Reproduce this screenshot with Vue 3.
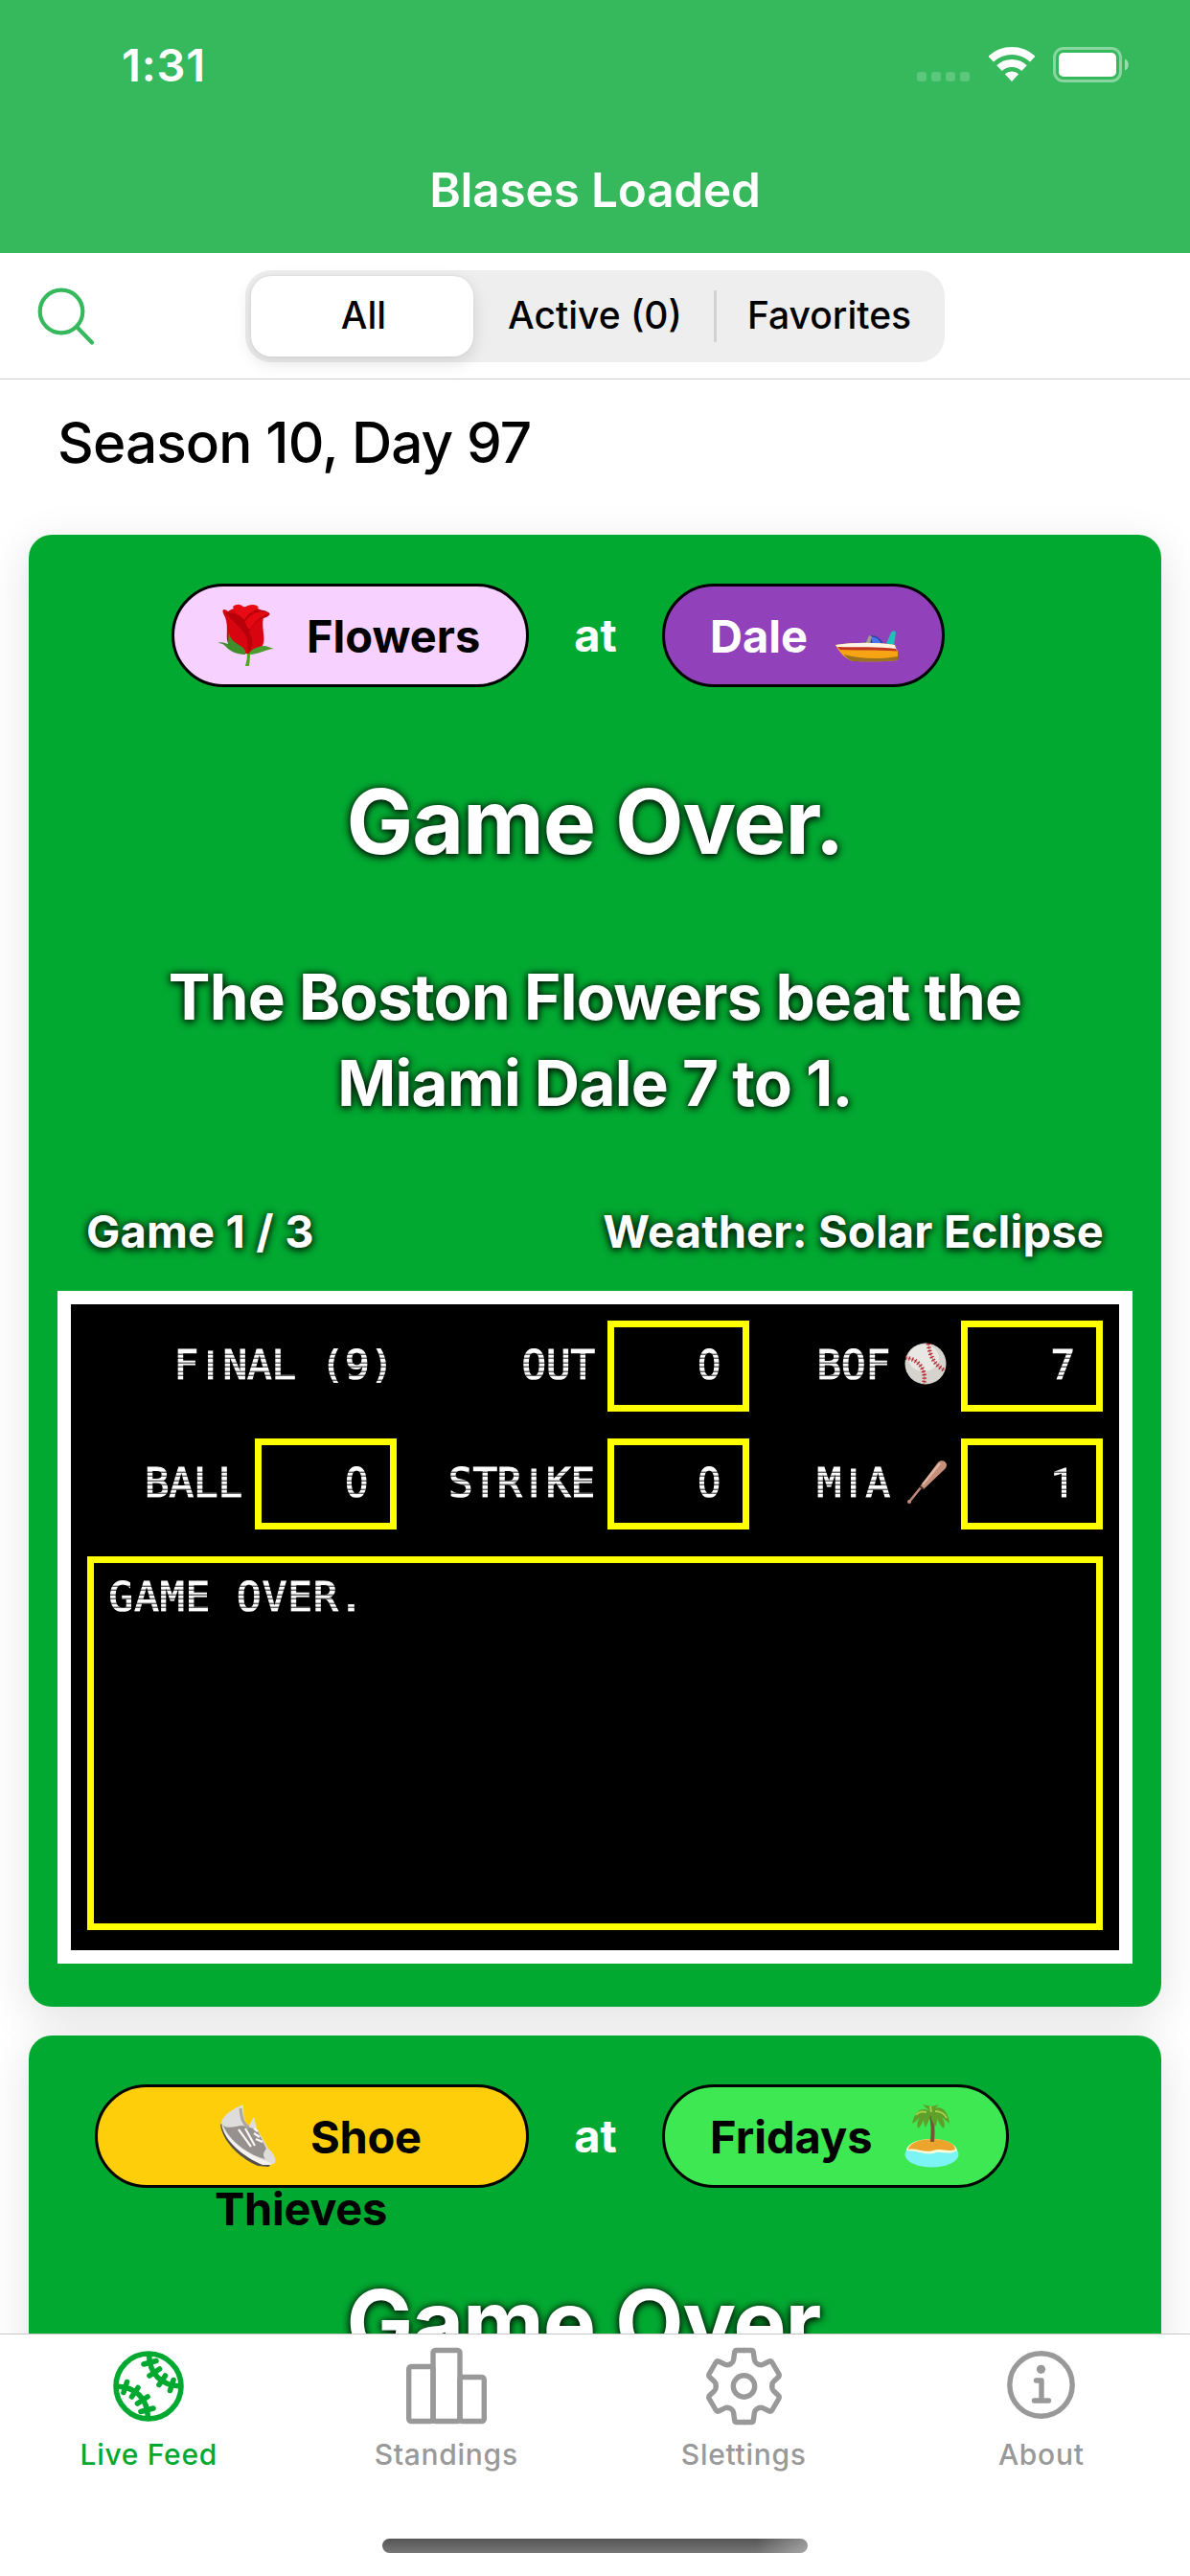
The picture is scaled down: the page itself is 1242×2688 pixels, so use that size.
<script setup>
const segments = ['All', 'Active (0)', 'Favorites']

const games = [
  {
    away: { name: 'Flowers', icon: 'rose', cls: 'flowers' },
    home: { name: 'Dale', icon: 'boat', cls: 'dale' },
    summary: 'The Boston Flowers beat the Miami Dale 7 to 1.',
    series: 'Game 1 / 3',
    weather: 'Weather: Solar Eclipse',
    board: [
      { label: 'FINAL (9)' },
      { label: 'OUT', value: '0' },
      { label: 'BOF', icon: 'ball', value: '7' },
      { label: 'BALL', value: '0' },
      { label: 'STRIKE', value: '0' },
      { label: 'MIA', icon: 'bat', value: '1' },
    ],
    message: 'GAME OVER.',
  },
  {
    away: { name: 'Shoe Thieves', icon: 'shoe', cls: 'thieves' },
    home: { name: 'Fridays', icon: 'island', cls: 'fridays' },
  },
]

const tabs = ['Live Feed', 'Standings', 'Slettings', 'About']
const gearQuarters = ['', 'matrix(-1 0 0 1 79 0)', 'matrix(1 0 0 -1 0 82)', 'matrix(-1 0 0 -1 79 82)']

const glyphClass = (c) => ({ I: 'bar', 0: 'zero', 1: 'one' })[c] || ''
</script>

<template>
  <div class="screen">
    <header class="header">
      <div class="status">
        <span class="time">1:31</span>
        <div class="indicators">
          <div class="signal"><i></i><i></i><i></i><i></i></div>
          <svg class="wifi" viewBox="0 0 48 36" width="48" height="36">
            <path d="M2.2 12.6A32 32 0 0 1 45.8 12.6" fill="none" stroke="#fff" stroke-width="8" />
            <path d="M11 22.1A19 19 0 0 1 37 22.1" fill="none" stroke="#fff" stroke-width="8" />
            <path d="M24 36L16.8 28.3A10.5 10.5 0 0 1 31.2 28.3Z" fill="#fff" />
          </svg>
          <svg class="battery" viewBox="0 0 80 37" width="80" height="37">
            <rect x="1.5" y="1.5" width="69" height="34" rx="9.5" fill="none" stroke="#fff" stroke-opacity=".42" stroke-width="3" />
            <rect x="6" y="6" width="60" height="25" rx="5" fill="#fff" />
            <path d="M75 12.5C80 14 80 23 75 24.5Z" fill="#fff" fill-opacity=".5" />
          </svg>
        </div>
      </div>
      <h1 class="title">Blases Loaded</h1>
    </header>

    <div class="toolbar">
      <svg class="search" viewBox="0 0 60 60" width="60" height="60" fill="none" stroke="#35b95c" stroke-width="4.2" stroke-linecap="round">
        <circle cx="25" cy="25" r="22.3" />
        <path d="M42 42L57 57.5" />
      </svg>
      <div class="segmented">
        <span v-for="(s, i) in segments" :key="s" class="segment" :class="['s' + i, { on: i === 0 }]">{{ s }}</span>
      </div>
    </div>

    <main class="feed">
      <h2 class="day">Season 10, Day 97</h2>

      <article v-for="g in games" :key="g.away.name" class="card">
        <div class="matchup">
          <div v-for="(t, side) in { away: g.away, home: g.home }" :key="side" class="pill" :class="[t.cls, side]">
            <p class="team">
              <span v-if="side === 'home'">{{ t.name }}</span>
              <svg class="emoji" viewBox="0 0 68 68" width="68" height="68">
                <g v-if="t.icon === 'rose'">
                  <path d="M31 48C34 55 33 60 31 67L35 67C36 60 36 54 36 48Z" fill="#52a51c" />
                  <path d="M13 10C21 4 44 3 52 12C46 22 52 34 50 43C47 53 38 55 33 54C24 54 14 50 12 40C11 31 14 22 8 12C6 7 10 7 13 10Z" fill="#d8040f" />
                  <path d="M18 5C23 1 27 3 30 6C35 2 43 2 45 6C39 9 36 12 31 19C26 16 20 12 18 5Z" fill="#e90b14" />
                  <path d="M30 19C36 9 46 6 55 11C59 13 54 15 53 16C45 18 38 24 35 32C39 38 40 46 34 54C33 46 35 40 30 33C26 26 17 20 10 11C21 11 26 14 30 19Z" fill="#b8000a" />
                  <path d="M31 20C38 11 47 8 56 12C47 15 40 21 36 29C33 27 31 24 31 20Z" fill="#e40812" />
                  <path d="M14 29C13 37 19 42 26 46C31 49 32 53 31 55C22 55 14 51 10 46C7 43 4 43 2 43C6 41 10 43 13 44Z" fill="#3f8d2b" />
                  <path d="M34 55C38 48 46 46 52 46L61 49C52 49 47 55 34 55Z" fill="#4b9b2e" />
                </g>
                <g v-else-if="t.icon === 'boat'">
                  <path d="M32 44L38 35C44 35 50 38 52 45Z" fill="#27439b" />
                  <path d="M39 37C44 36 48 40 50 44L41 44Z" fill="#4973ef" />
                  <path d="M33 44L37 35L40 36L38 44Z" fill="#a5998f" />
                  <path d="M54 46L60 32C61 30 65 30 65 32L63 46Z" fill="#24bdbb" />
                  <path d="M2 45C20 42 45 42 64 45L67 52V61C50 63 28 62 20 62C12 59 6 53 2 45Z" fill="#f6a414" />
                  <path d="M2 45C22 42 45 42 64 45L65 49C45 47.500 20 48.500 5 48Z" fill="#fff4e6" />
                  <path d="M4 47C25 47.500 47 46.500 65 49L66 51.500C45 49.500 24 51 7 50Z" fill="#c43522" />
                  <path d="M11 55C28 60 50 60 67 57V61C50 63 28 62 20 62C16 60 13 58 11 55Z" fill="#98721e" />
                </g>
                <g v-else-if="t.icon === 'shoe'">
                  <path d="M6 23C8 40 26 58 45 66L56 67C62 64 54 57 48 55L14 18Z" fill="#55504d" />
                  <path d="M7 21C10 36 28 54 48 64L62 64C66 60 61 52 56 48L44 27L41 15L36 24C32 23 30 18 30 2C19 6 8 14 7 21Z" fill="#dfdddb" />
                  <path d="M9 24C15 28 23 24 29 24L44 28L54 48C52 51 49 54 53 59C35 55 15 39 9 24Z" fill="#96918e" />
                  <path d="M7 22C14 40 32 53 56 62L60 65L50 65C29 56 10 40 7 22Z" fill="#f4f3f2" />
                  <path d="M25 28L38 46M32 27L42 45M41 27L45 30M41 32L47 36M43 38L50 41" stroke="#f8f7f5" stroke-width="2.200" fill="none" />
                  <path d="M27 6C28 17 30 23 36 26" stroke="#aaa6a3" stroke-width="3" fill="none" />
                </g>
                <g v-else>
                  <ellipse cx="34.500" cy="54" rx="28" ry="13.500" fill="#7cf4f5" />
                  <path d="M8 50C10 34 58 34 61 50C51 56 45 49 36 53C28 55 19 50 8 50Z" fill="#fffbd9" />
                  <path d="M10 49C12 35 58 34 59 49C49 52 45 47 36 50C27 53 18 47 10 49Z" fill="#eda42c" />
                  <path d="M34 10C38 20 38 31 37 41H33C34 30 34 20 31 12Z" fill="#77533a" />
                  <path d="M33 9C24 4 17 8 14 22C18 20 20 17 22 15C19 19 19 24 20 27C23 25 24 22 26 18C26 22 27 24 28 26C30 22 32 17 33 13C34 18 36 22 38 25C40 22 40 20 40 17C42 21 44 25 47 27C49 22 47 18 45 15C48 17 50 20 53 22C52 10 45 3 38 6L42 2L34 4L25 2L29 6Z" fill="#5fa02b" />
                  <path d="M18 13C21 9 25 9 29 10M38 9C44 9 48 12 50 16M34 10L33 4" stroke="#a5cf48" stroke-width="2" fill="none" />
                </g>
              </svg>
              <span v-if="side === 'away'">{{ t.name }}</span>
            </p>
          </div>
          <span class="at">at</span>
        </div>

        <h3 class="headline">Game Over.</h3>

        <template v-if="g.board">
          <p class="summary">{{ g.summary }}</p>
          <div class="meta">
            <span>{{ g.series }}</span>
            <span>{{ g.weather }}</span>
          </div>
          <div class="board">
            <div class="stats">
              <div v-for="s in g.board" :key="s.label" class="stat">
                <span class="led" :class="{ last: !s.value }"><span v-for="(c, i) in s.label" :key="i" class="cell" :class="glyphClass(c)">{{ c }}</span></span>
                <svg v-if="s.icon === 'ball'" class="play" viewBox="0 0 44 46" width="44" height="46">
                  <circle cx="22" cy="23" r="21.500" fill="#d6d3cf" />
                  <ellipse cx="20" cy="17" rx="16" ry="14" fill="#e9e7e4" />
                  <path d="M1 17C13 17 24 29 20 44" fill="none" stroke="#c98a88" stroke-width="1.200" />
                  <path d="M1 17C13 17 24 29 20 44" fill="none" stroke="#b3262d" stroke-width="4.500" stroke-dasharray="1.300 2.200" />
                  <path d="M25 2C26 15 32 25 42 30" fill="none" stroke="#c98a88" stroke-width="1.200" />
                  <path d="M25 2C26 15 32 25 42 30" fill="none" stroke="#b3262d" stroke-width="4.500" stroke-dasharray="1.300 2.200" />
                </svg>
                <svg v-else-if="s.icon === 'bat'" class="play" viewBox="0 0 44 46" width="44" height="46">
                  <path d="M5 44L18 28" stroke="#bd8873" stroke-width="2.600" stroke-linecap="round" />
                  <path d="M17 27L35 3C38 0 43 1 44 5C44 8 43 9 41 11L20 31Z" fill="#c58f7a" />
                  <path d="M19 26L37 4" stroke="#e3b8a6" stroke-width="2" />
                  <path d="M16 28L20 31" stroke="#3c2b26" stroke-width="2" />
                  <circle cx="5" cy="44" r="2" fill="#c58f7a" />
                </svg>
                <span v-if="s.value" class="box"><span class="led"><span class="cell" :class="glyphClass(s.value)">{{ s.value }}</span></span></span>
              </div>
            </div>
            <div class="message">
              <span class="led wide"><span v-for="(c, i) in g.message" :key="i" class="cell" :class="glyphClass(c)">{{ c }}</span></span>
            </div>
          </div>
        </template>
      </article>
    </main>

    <footer class="footer">
      <nav class="tabs">
        <a v-for="(t, i) in tabs" :key="t" class="tab" :class="{ on: i === 0 }">
          <svg v-if="i === 0" viewBox="0 0 74 74" width="74" height="74" fill="none" stroke="currentColor" stroke-width="5.600" stroke-linecap="round">
            <circle cx="37" cy="37" r="34" />
            <g v-for="r in [0, 180]" :key="r" :transform="`rotate(${r} 37 37)`">
              <path d="M37.500 4C38 25 51 36 70 37" />
              <path d="M32 14L45 10.500M38 26L48.500 19M48 35.500L54.500 26M59.500 41.500L63 30.500" />
            </g>
          </svg>
          <svg v-else-if="i === 1" viewBox="0 0 84 82" width="84" height="82" fill="none" stroke="currentColor" stroke-width="5.400">
            <rect x="2.700" y="20.500" width="25.300" height="57" rx="2.500" />
            <rect x="56" y="31.500" width="25.300" height="46" rx="2.500" />
            <rect x="28" y="3.500" width="28" height="74" rx="2.500" />
          </svg>
          <svg v-else-if="i === 2" viewBox="0 0 79 82" width="79" height="82" fill="none" stroke="currentColor" stroke-width="5.400" stroke-linejoin="round">
            <path v-for="q in gearQuarters" :key="q" :transform="q" d="M39 3.500H47Q49 3.500 49.300 5.500L50.400 13.500Q50.800 16 53.200 17.500Q56.500 19.700 59.500 18.200L66 15Q67.800 14.300 68.800 16L75.800 28Q76.800 30 75.300 31.500L70.500 36Q68.800 37.500 68.800 40V41.500" />
            <circle cx="39.500" cy="41" r="11.200" />
          </svg>
          <svg v-else viewBox="0 0 71 74" width="71" height="74" fill="none" stroke="currentColor" stroke-width="5.400" stroke-linecap="round" stroke-linejoin="round">
            <circle cx="35.500" cy="35.500" r="32.700" />
            <circle cx="35.500" cy="19.300" r="4.600" fill="currentColor" stroke="none" />
            <path d="M30.500 31H36V52M28.500 52H43.500" />
          </svg>
          <span>{{ t }}</span>
        </a>
      </nav>
      <div class="indicator"></div>
    </footer>
  </div>
</template>

<style>
body {
  margin: 0;
  background: #fff;
}
</style>

<style scoped>
.screen {
  width: 1242px;
  height: 2688px;
  display: flex;
  flex-direction: column;
  overflow: hidden;
  background: #fff;
  color: #000;
  font-family: Inter, "Liberation Sans", sans-serif;
}
h1, h2, h3, p { margin: 0; }
svg { display: block; flex: none; }

.header { height: 264px; flex: none; background: #35b95c; color: #fff; }
.status { height: 136px; display: flex; justify-content: space-between; padding: 0 63px 0 127px; }
.time { font-size: 47px; line-height: 136px; font-weight: 600; letter-spacing: .8px; }
.indicators { display: flex; align-items: flex-start; padding-top: 49px; }
.signal { display: flex; gap: 5px; margin: 26px 20px 0 0; }
.signal i { width: 10px; height: 10px; border-radius: 3px; background: rgba(255, 255, 255, .2); }
.battery { margin-left: 19px; }
.title { text-align: center; font-size: 49.500px; line-height: 124px; font-weight: 600; letter-spacing: -.2px; }

.toolbar { height: 131px; flex: none; display: flex; align-items: center; border-bottom: 1px solid #ccc; }
.search { margin: 0 158px 0 39px; }
.segmented { width: 730px; height: 96px; display: flex; align-items: center; padding: 6px; box-sizing: border-box; border-radius: 27px; background: #eee; margin-left: -1px; }
.segment { font-size: 39px; line-height: 82px; height: 84px; box-sizing: border-box; font-weight: 500; text-align: center; padding-left: 3px; }
.segment.on { background: #fff; border-radius: 21px; box-shadow: 0 6px 18px rgba(0, 0, 0, .12), 0 0 3px rgba(0, 0, 0, .08); }
.s0 { width: 232px; }
.s1 { width: 251px; }
.s2 { flex: 1; height: 54px; line-height: 52px; border-left: 3px solid #d2d2d2; }

.feed { flex: 1; min-height: 0; overflow: hidden; display: flex; flex-direction: column; }
.day { flex: none; height: 136px; padding: 26px 0 0 60px; font-size: 58.500px; line-height: 80px; font-weight: 500; letter-spacing: -.9px; }
.card {
  flex: none;
  margin: 0 30px 30px;
  padding: 51px 30px 44.500px;
  border-radius: 24px;
  background: #02a931;
  box-shadow: 0 12px 48px rgba(0, 0, 0, .12);
}
.matchup { display: grid; grid-template-columns: 492px 139px 1fr; height: 108px; align-items: center; }
.pill { height: 108px; box-sizing: border-box; border: 3px solid #000; border-radius: 54px; padding-top: 14px; font-size: 47px; line-height: 75.500px; font-weight: 700; grid-row: 1; }
.away { grid-column: 1; justify-self: end; }
.home { grid-column: 3; }
.at { grid-column: 2; grid-row: 1; color: #fff; text-align: center; font-size: 47px; font-weight: 700; line-height: 104px; }
.team { white-space: nowrap; }
.emoji { display: inline-block; vertical-align: -15px; }
.away .emoji { margin-right: 27px; }
.home .emoji { margin-left: 17px; }
.home .team > span { margin-right: 10px; }
.flowers { width: 373px; background: #f7d1ff; padding-left: 43px; }
.dale { width: 295px; background: #9141ba; color: #fff; padding-left: 47px; }
.thieves { width: 453px; background: #ffce0a; padding-left: 122px; letter-spacing: -.3px; }
.thieves .team { width: 245px; white-space: normal; }
.thieves .emoji { margin-right: 32px; }
.fridays { width: 362px; background: #3ee852; padding-left: 47px; }

.headline, .summary, .meta { color: #fff; text-align: center; text-shadow: 0 1px 9px #000, 0 2px 9px rgba(0, 0, 0, .5); font-weight: 700; }
.headline { margin-top: 84px; font-size: 93px; line-height: 112px; letter-spacing: -1.150px; }
.summary { margin: 83px 60px 0; padding: 0 10px; font-size: 65.500px; line-height: 90px; letter-spacing: -.7px; }
.meta { margin-top: 79px; padding: 0 30px; display: flex; justify-content: space-between; font-size: 47px; line-height: 60px; letter-spacing: .2px; }

.board { box-sizing: border-box; height: 702px; margin-top: 32px; border: 14px solid #fff; background: #000; padding: 17px; color: #fff; }
.stats { display: grid; grid-template-columns: 323px 368px 369px; row-gap: 28px; }
.stat { height: 95px; display: flex; align-items: center; justify-content: flex-end; }
.led {
  display: block;
  white-space: nowrap;
  height: 36px;
  margin-top: -2px;
  font: 42.500px/36px "DejaVu Sans Mono", "Liberation Mono", monospace;
  -webkit-text-stroke: 1.200px #fff;
  -webkit-mask: repeating-linear-gradient(to bottom, #000 0 3.600px, rgba(0, 0, 0, .12) 3.600px 4.570px) 0 1.700px;
  mask: repeating-linear-gradient(to bottom, #000 0 3.600px, rgba(0, 0, 0, .12) 3.600px 4.570px) 0 1.700px;
}
.cell { display: inline-block; width: 25.500px; text-align: center; white-space: pre; }
.wide .cell { width: 26.700px; }
.bar { font-family: "Liberation Sans", sans-serif; }
.zero { font-family: "DejaVu Sans Condensed", "DejaVu Sans", sans-serif; font-stretch: condensed; }
.one { font-family: Roboto, sans-serif; }
.last { margin-right: 3px; }
.play { margin: -6px 2px 0 15px; }
.box { box-sizing: border-box; width: 148px; height: 95px; margin-left: 13px; border: 7px solid #ff0; display: flex; align-items: center; justify-content: flex-end; padding-right: 22px; }
.message { box-sizing: border-box; height: 389.500px; margin-top: 28px; border: 7px solid #ff0; padding: 20px 15px; }

.footer { height: 252px; flex: none; border-top: 1px solid #c8c8c8; background: #fff; }
.tabs { display: grid; grid-template-columns: repeat(4, 1fr); height: 213px; }
.tab { display: flex; flex-direction: column; align-items: center; color: #999; font-size: 30px; line-height: 36px; font-weight: 500; letter-spacing: .7px; }
.tab.on { color: #02a931; }
.tab svg { height: 82px; margin: 13px 0 12px; overflow: visible; }
.tab.on svg, .tab:last-child svg { height: 74px; margin: 17px 0 16px; }
.indicator { width: 444px; height: 15px; margin: 0 auto; border-radius: 8px; background: linear-gradient(90deg, transparent 88%, rgba(255, 255, 255, .35) 100%), linear-gradient(#555, #777); }
</style>
